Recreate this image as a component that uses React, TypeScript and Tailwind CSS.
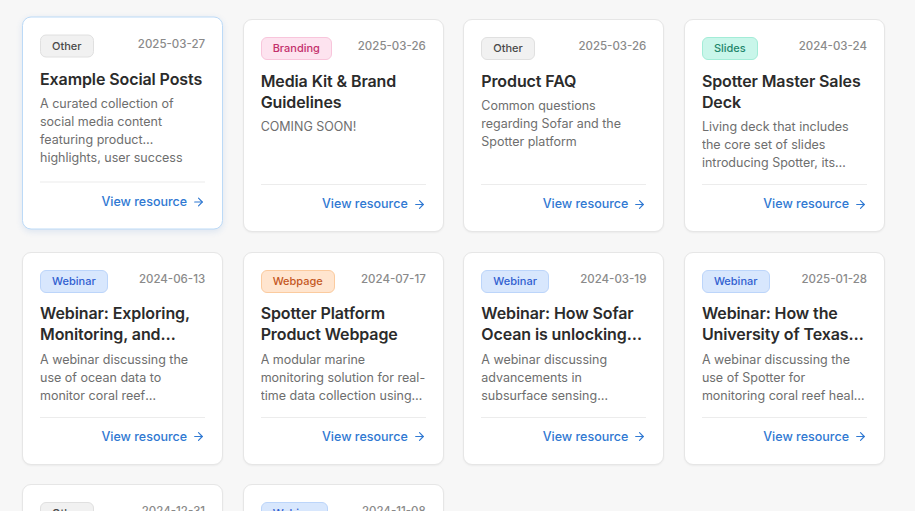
import { ArrowRight } from 'lucide-react';

type Tag = 'Other' | 'Branding' | 'Slides' | 'Webinar' | 'Webpage';

const tagStyles: Record<Tag, string> = {
  Other: 'bg-[#f1f1f1] border-[#e0e0e0] text-[#4a4a4a]',
  Branding: 'bg-[#fde3ef] border-[#f8c5db] text-[#c3306c]',
  Slides: 'bg-[#c9f6ea] border-[#a3ecd7] text-[#23866c]',
  Webinar: 'bg-[#d8e7fd] border-[#bcd5fa] text-[#3160d0]',
  Webpage: 'bg-[#ffe5cf] border-[#fbcb9f] text-[#c4581f]',
};

const resources: Array<{
  tag: Tag;
  date: string;
  title: string;
  text: string;
  active?: boolean;
}> = [
  {
    tag: 'Other',
    date: '2025-03-27',
    title: 'Example Social Posts',
    text: 'A curated collection of social media content featuring product… highlights, user success',
    active: true,
  },
  {
    tag: 'Branding',
    date: '2025-03-26',
    title: 'Media Kit & Brand Guidelines',
    text: 'COMING SOON!',
  },
  {
    tag: 'Other',
    date: '2025-03-26',
    title: 'Product FAQ',
    text: 'Common questions regarding Sofar and the Spotter platform',
  },
  {
    tag: 'Slides',
    date: '2024-03-24',
    title: 'Spotter Master Sales Deck',
    text: 'Living deck that includes the core set of slides introducing Spotter, its capabilities, and key customer use cases.',
  },
  {
    tag: 'Webinar',
    date: '2024-06-13',
    title: 'Webinar: Exploring, Monitoring, and Protecting Coral Reefs',
    text: 'A webinar discussing the use of ocean data to monitor coral reef ecosystems and resilience.',
  },
  {
    tag: 'Webpage',
    date: '2024-07-17',
    title: 'Spotter Platform Product Webpage',
    text: 'A modular marine monitoring solution for real-time data collection using the Spotter buoy.',
  },
  {
    tag: 'Webinar',
    date: '2024-03-19',
    title: 'Webinar: How Sofar Ocean is unlocking subsurface data',
    text: 'A webinar discussing advancements in subsurface sensing technologies and real-time ocean data.',
  },
  {
    tag: 'Webinar',
    date: '2025-01-28',
    title: 'Webinar: How the University of Texas uses Spotter',
    text: 'A webinar discussing the use of Spotter for monitoring coral reef health in the Gulf.',
  },
  {
    tag: 'Other',
    date: '2024-12-31',
    title: 'Year in Review',
    text: 'A look back at the highlights from the past year.',
  },
  {
    tag: 'Webinar',
    date: '2024-11-08',
    title: 'Webinar: Wave Data at Scale',
    text: 'A webinar discussing distributed ocean sensing networks.',
  },
];

function ResourceCard({ r }: { r: (typeof resources)[number] }) {
  return (
    <div
      className={
        'flex flex-col rounded-[9px] border bg-white p-[17px] ' +
        (r.active
          ? 'border-[#bcdaf7] shadow-[0_2px_6px_rgba(40,110,200,0.12)] -translate-y-[2.5px]'
          : 'border-[#e6e6e6] shadow-[0_1px_2px_rgba(0,0,0,0.05)]')
      }
    >
      <div className="flex items-start justify-between">
        <span
          className={
            'inline-flex h-[23px] items-center rounded-[6px] border px-[11px] text-[11px] font-medium ' +
            tagStyles[r.tag]
          }
        >
          {r.tag}
        </span>
        <span className="pt-[1px] text-[11.5px] font-medium text-[#8a8a8a]">{r.date}</span>
      </div>
      <h3 className="mt-[10.5px] line-clamp-2 text-[16px] font-semibold leading-[21px] tracking-[-0.1px] text-[#2b2b2b]">
        {r.title}
      </h3>
      <p
        className={
          'mt-[5.5px] mb-[12px] text-[12.5px] leading-[18px] text-[#6e6e6e] ' +
          (r.active ? '' : 'line-clamp-3')
        }
      >
        {r.text}
      </p>
      <div className="mt-auto flex justify-end border-t border-[#ececec] pt-[9px]">
        <span className="flex items-center gap-[5px] text-[12.5px] font-medium leading-[20px] text-[#2f78d2]">
          View resource
          <ArrowRight size={13} strokeWidth={2.1} />
        </span>
      </div>
    </div>
  );
}

export default function App() {
  return (
    <div className="min-h-screen bg-[#f7f7f7] px-[22px] pt-[19px] pb-8 font-['Inter',sans-serif]">
      <div className="grid w-[863px] grid-cols-4 gap-[19.5px]">
        {resources.map((r, i) => (
          <ResourceCard key={i} r={r} />
        ))}
      </div>
    </div>
  );
}
